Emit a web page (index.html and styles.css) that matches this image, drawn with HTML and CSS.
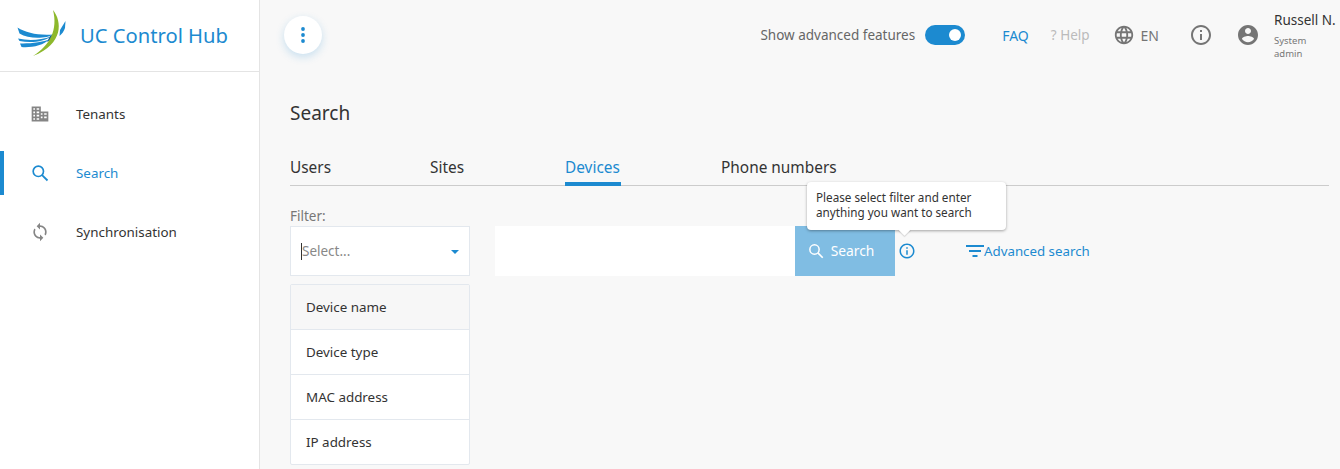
FILE: index.html
```html
<!DOCTYPE html>
<html lang="en">
<head>
<meta charset="utf-8">
<title>UC Control Hub</title>
<link rel="stylesheet" href="styles.css">
</head>
<body>
<div class="app">
  <aside class="sidebar">
    <div class="brand">
      <svg class="logo" width="50" height="50" viewBox="16 9 50 50">
        <path d="M17.500 27.500 C26 33 38 35.500 53 34.500 C47 38.500 29 39.500 19.500 33.500 Z" fill="#1c8ad0"/>
        <path d="M18 38.500 C29 41 41 40 51 36.500 C45 41.500 31 43.500 19.500 41 Z" fill="#1c8ad0"/>
        <path d="M20 43.500 C28 43.500 40 43 49 39.500 C44 45.500 30 48 21.500 47 Z" fill="#1c8ad0"/>
        <path d="M50 36 L56 33 C54 37 51 40 47 42 Z" fill="#175f96"/>
        <path d="M53 10 C62 21 64 44 33 56 C50 45 58 30 53 10 Z" fill="#8db82c"/>
        <path d="M60 30 L65.500 21 L65 28 C64 31 62 34 59.500 36 Z" fill="#1c8ad0"/>
      </svg>
      <span class="brand-name">UC Control Hub</span>
    </div>
    <nav class="nav">
      <a class="nav-item">
        <svg class="nav-icon" viewBox="0 0 24 24"><path fill="#858585" fill-rule="evenodd" d="M2 3h11v6h9v12H2V3zm2 2v2h2V5H4zm4 0v2h3V5H8zM4 9v2h2V9H4zm4 0v2h3V9H8zm-4 4v2h2v-2H4zm4 0v2h3v-2H8zm5-2v2h2v-2h-2zm4 0v2h3v-2h-3zm-4 4v2h2v-2h-2zm4 0v2h3v-2h-3zM4 17v2h2v-2H4zm4 0v2h3v-2H8z"/></svg>
        <span>Tenants</span>
      </a>
      <a class="nav-item active">
        <svg class="nav-icon" viewBox="0 0 24 24"><circle cx="10" cy="10" r="6.200" fill="none" stroke="#1c8ad0" stroke-width="2"/><path d="M14.500 14.500L21 21" stroke="#1c8ad0" stroke-width="2.200" fill="none"/></svg>
        <span>Search</span>
      </a>
      <a class="nav-item">
        <svg class="nav-icon" viewBox="0 0 24 24"><path fill="#858585" d="M12 4V1L8 5l4 4V6c3.310 0 6 2.690 6 6 0 1.010-.25 1.970-.7 2.800l1.460 1.460C19.540 15.030 20 13.570 20 12c0-4.420-3.580-8-8-8zm0 14c-3.310 0-6-2.690-6-6 0-1.010.25-1.970.7-2.800L5.240 7.740C4.460 8.970 4 10.430 4 12c0 4.420 3.580 8 8 8v3l4-4-4-4v3z"/></svg>
        <span>Synchronisation</span>
      </a>
    </nav>
  </aside>
  <div class="main">
    <header class="topbar">
      <button class="menu-btn" type="button" aria-label="Menu">
        <svg width="4" height="18" viewBox="0 0 4 18"><circle cx="2" cy="3" r="1.900" fill="#1c8ad0"/><circle cx="2" cy="9" r="1.900" fill="#1c8ad0"/><circle cx="2" cy="15" r="1.900" fill="#1c8ad0"/></svg>
      </button>
      <div class="top-actions">
        <span class="adv-label">Show advanced features</span>
        <span class="toggle"><span class="knob"></span></span>
        <a class="faq">FAQ</a>
        <span class="help">? Help</span>
        <span class="lang">
          <svg width="22" height="22" viewBox="0 0 24 24"><path fill="#757575" d="M11.990 2C6.470 2 2 6.480 2 12s4.470 10 9.990 10C17.520 22 22 17.520 22 12S17.520 2 11.990 2zm6.930 6h-2.950c-.32-1.250-.78-2.450-1.380-3.560 1.840.63 3.370 1.910 4.330 3.560zM12 4.040c.83 1.200 1.480 2.530 1.910 3.960h-3.820c.43-1.430 1.080-2.760 1.910-3.960zM4.260 14C4.100 13.360 4 12.690 4 12s.1-1.360.26-2h3.380c-.08.66-.14 1.320-.14 2s.06 1.340.14 2H4.260zm.82 2h2.950c.32 1.250.78 2.450 1.380 3.560-1.840-.63-3.370-1.900-4.330-3.560zm2.950-8H5.080c.96-1.660 2.490-2.930 4.330-3.560C8.810 5.550 8.350 6.750 8.030 8zM12 19.960c-.83-1.200-1.480-2.530-1.910-3.960h3.820c-.43 1.430-1.080 2.760-1.910 3.960zM14.340 14H9.660c-.09-.66-.16-1.320-.16-2s.07-1.350.16-2h4.680c.09.650.16 1.320.16 2s-.07 1.340-.16 2zm.25 5.560c.6-1.110 1.060-2.310 1.380-3.560h2.950c-.96 1.650-2.490 2.930-4.330 3.560zM16.360 14c.08-.66.14-1.320.14-2s-.06-1.340-.14-2h3.380c.16.640.26 1.310.26 2s-.1 1.360-.26 2h-3.380z"/></svg>
          <span>EN</span>
        </span>
        <svg class="info-top" width="24" height="24" viewBox="0 0 24 24"><path fill="#757575" d="M11 7h2v2h-2V7zm0 4h2v6h-2v-6zm1-9C6.480 2 2 6.480 2 12s4.480 10 10 10 10-4.480 10-10S17.520 2 12 2zm0 18c-4.410 0-8-3.590-8-8s3.590-8 8-8 8 3.590 8 8-3.590 8-8 8z"/></svg>
        <svg class="avatar" width="24" height="24" viewBox="0 0 24 24"><path fill="#757575" d="M12 2C6.480 2 2 6.480 2 12s4.480 10 10 10 10-4.480 10-10S17.520 2 12 2zm0 3c1.660 0 3 1.340 3 3s-1.340 3-3 3-3-1.340-3-3 1.340-3 3-3zm0 14.200c-2.500 0-4.710-1.280-6-3.220.03-1.990 4-3.080 6-3.080 1.990 0 5.970 1.090 6 3.080-1.290 1.940-3.500 3.220-6 3.220z"/></svg>
        <div class="user">
          <div class="user-name">Russell N.</div>
          <div class="user-role">System<br>admin</div>
        </div>
      </div>
    </header>
    <main class="content">
      <h1 class="title">Search</h1>
      <div class="tabs">
        <a class="tab tab-users">Users</a>
        <a class="tab tab-sites">Sites</a>
        <a class="tab tab-devices active">Devices</a>
        <a class="tab">Phone numbers</a>
      </div>
      <div class="search-area">
        <div class="filter-col">
          <label class="filter-label">Filter:</label>
          <div class="select">
            <span class="caret"></span><span class="placeholder">Select...</span>
            <span class="arrow"></span>
          </div>
          <ul class="options">
            <li class="option focused">Device name</li>
            <li class="option">Device type</li>
            <li class="option">MAC address</li>
            <li class="option">IP address</li>
          </ul>
        </div>
        <div class="search-row">
          <div class="search-input"></div>
          <button class="search-btn" type="button">
            <svg width="18" height="18" viewBox="0 0 24 24"><circle cx="10" cy="10" r="6.200" fill="none" stroke="#fff" stroke-width="2"/><path d="M14.500 14.500L21 21" stroke="#fff" stroke-width="2.200" fill="none"/></svg>
            <span class="search-text">Search</span>
          </button>
          <span class="info-wrap">
            <svg width="18" height="18" viewBox="0 0 24 24"><path fill="#1c8ad0" d="M11 7h2v2h-2V7zm0 4h2v6h-2v-6zm1-9C6.480 2 2 6.480 2 12s4.480 10 10 10 10-4.480 10-10S17.520 2 12 2zm0 18c-4.410 0-8-3.590-8-8s3.590-8 8-8 8 3.590 8 8-3.590 8-8 8z"/></svg>
            <span class="tooltip">Please select filter and enter<br>anything you want to search</span>
          </span>
          <a class="advanced">
            <svg width="18" height="14" viewBox="0 0 18 14"><path fill="#1c8ad0" d="M0 1h18v2H0zM3 6h12v2H3zM6.500 11h5v2h-5z"/></svg>
            <span>Advanced search</span>
          </a>
        </div>
      </div>
    </main>
  </div>
</div>
</body>
</html>
```

FILE: styles.css
```css
* { box-sizing: border-box; }
html, body { margin: 0; height: 100%; overflow: hidden; }
body { font-family: "Noto Sans", "Open Sans", sans-serif; color: #333; background: #f8f8f8; }
a { text-decoration: none; }
.app { display: flex; height: 469px; }

.sidebar { width: 260px; flex: none; background: #fff; border-right: 1px solid #e4e4e4; }
.brand { height: 72px; display: flex; align-items: center; padding-left: 16px; border-bottom: 1px solid #e4e4e4; }
.logo { flex: none; margin-top: -3px; }
.brand-name { margin-left: 14px; font-size: 20.200px; line-height: 26px; margin-top: -2px; color: #1c8ad0; white-space: nowrap; }
.nav { padding-top: 12px; }
.nav-item { display: flex; align-items: center; height: 59px; padding-left: 30px; font-size: 13.400px; color: #333; position: relative; }
.nav-item span { margin-left: 26px; }
.nav-icon { width: 20px; height: 20px; flex: none; }
.nav-item.active { color: #1c8ad0; }
.nav-item.active::before { content: ""; position: absolute; left: 0; top: 8px; width: 4px; height: 44px; background: #1c8ad0; }

.main { flex: 1; min-width: 0; }
.topbar { height: 72px; display: flex; align-items: center; justify-content: space-between; padding: 0 0 0 24px; }
.menu-btn { width: 38px; height: 38px; border: 0; padding: 0; border-radius: 50%; background: #fff; box-shadow: 0 3px 8px rgba(28,138,208,.22); display: flex; align-items: center; justify-content: center; margin-top: -3px; }
.top-actions { display: flex; align-items: center; margin-top: -2px; }
.adv-label { font-size: 13.500px; color: #666; white-space: nowrap; }
.toggle { width: 40px; height: 20px; border-radius: 10px; background: #1c8ad0; margin-left: 10px; position: relative; display: block; }
.knob { position: absolute; right: 4px; top: 4px; width: 12px; height: 12px; border-radius: 50%; background: #fff; }
.faq { margin-left: 37px; font-size: 14px; color: #1c8ad0; }
.help { margin-left: 22px; font-size: 13.500px; color: #bbb; white-space: nowrap; }
.lang { margin-left: 23px; display: flex; align-items: center; font-size: 14px; color: #757575; }
.lang span { margin-left: 6px; }
.info-top { margin-left: 30px; }
.avatar { margin-left: 23px; }
.user { width: 66px; margin-left: 14px; }
.user-name { font-size: 13.500px; color: #333; line-height: 18px; white-space: nowrap; }
.user-role { font-size: 9.500px; line-height: 13px; color: #777; margin-top: 5px; }

.content { padding: 0 11px 0 30px; }
.title { margin: 0; font-size: 19px; font-weight: 400; line-height: 28px; padding-top: 27px; box-sizing: content-box; height: 28px; color: #333; }
.tabs { display: flex; margin-top: 26px; height: 33px; border-bottom: 1px solid #ccc; }
.tab { font-size: 15.400px; color: #333; line-height: 24px; height: 33px; white-space: nowrap; padding-top: 3px; }
.tab-users { width: 140px; }
.tab-sites { width: 135px; }
.tab-devices { width: 56px; margin-right: 100px; }
.tab.active { color: #1c8ad0; border-bottom: 4px solid #1c8ad0; }

.search-area { display: flex; margin-top: 20px; align-items: flex-start; }
.filter-col { width: 180px; flex: none; }
.filter-label { display: block; font-size: 13.500px; line-height: 20px; color: #777; }
.select { height: 50px; background: #fff; border: 1px solid #e3e8ee; display: flex; align-items: center; padding-left: 10px; position: relative; }
.caret { width: 1px; height: 17px; background: #333; }
.placeholder { font-size: 13.500px; color: #888; }
.arrow { position: absolute; right: 10px; top: 23px; border: 4px solid transparent; border-top: 4px solid #1c8ad0; border-bottom: 0; }
.options { list-style: none; margin: 8px 0 0; padding: 0; border: 1px solid #e3e8ee; background: #fff; border-radius: 2px; }
.option { height: 45px; line-height: 44px; padding-left: 15px; font-size: 13.400px; color: #333; border-bottom: 1px solid #e3e8ee; }
.option:last-child { border-bottom: 0; height: 44px; }
.option.focused { background: #f7f7f7; }

.search-row { display: flex; align-items: center; height: 50px; margin-top: 20px; margin-left: 25px; }
.search-input { width: 300px; height: 50px; background: #fff; }
.search-btn { width: 100px; height: 50px; border: 0; padding: 0 10px 0 1px; background: #80bde3; color: #fff; font: inherit; font-size: 13.800px; display: flex; align-items: center; justify-content: center; gap: 6px; }
.search-text { margin-top: -2px; }
.info-wrap { position: relative; display: block; width: 18px; height: 18px; margin-left: 3px; }
.tooltip { position: absolute; left: -91px; top: -60px; width: 199px; height: 48px; background: #fff; border-radius: 4px; box-shadow: 0 1px 3px rgba(0,0,0,.35); font-size: 11.700px; line-height: 15px; padding: 8px 9px; color: #333; white-space: nowrap; }
.tooltip::after { content: ""; position: absolute; left: 93px; bottom: -4px; width: 9px; height: 9px; background: #fff; transform: rotate(45deg); box-shadow: 1px 1px 1px rgba(0,0,0,.12); }
.advanced { margin-left: 50px; display: flex; align-items: center; font-size: 13.300px; color: #1c8ad0; white-space: nowrap; }
```
